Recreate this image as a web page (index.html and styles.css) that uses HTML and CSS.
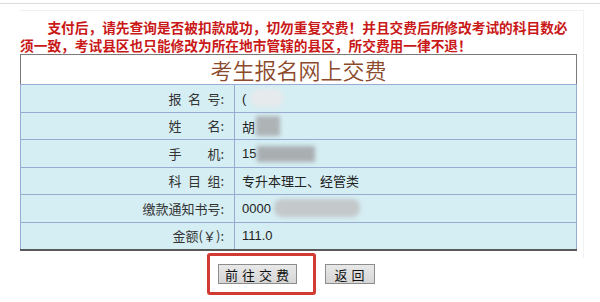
FILE: index.html
```html
<!DOCTYPE html>
<html lang="zh-CN">
<head>
<meta charset="utf-8">
<title>考生报名网上交费</title>
<link rel="stylesheet" href="styles.css">
</head>
<body>
<div class="topbar"></div>
<div class="wrap">
  <p class="notice">支付后，请先查询是否被扣款成功，切勿重复交费！并且交费后所修改考试的科目数必须一致，考试县区也只能修改为所在地市管辖的县区，所交费用一律不退！</p>
  <table class="fee">
    <tr class="title-row"><td colspan="2">考生报名网上交费</td></tr>
    <tr><td class="lbl">报&ensp;名&ensp;号:</td><td class="val"><span class="vtxt">(</span><span class="blur b1"></span></td></tr>
    <tr><td class="lbl">姓&emsp;&emsp;名:</td><td class="val"><span class="vtxt">胡</span><span class="blur b2"></span></td></tr>
    <tr><td class="lbl">手&emsp;&emsp;机:</td><td class="val"><span class="vtxt">15</span><span class="blur b3"></span></td></tr>
    <tr><td class="lbl">科&ensp;目&ensp;组:</td><td class="val">专升本理工、经管类</td></tr>
    <tr><td class="lbl">缴款通知书号:</td><td class="val"><span class="vtxt">0000</span><span class="blur b4"></span></td></tr>
    <tr><td class="lbl">金额(￥):</td><td class="val">111.0</td></tr>
  </table>
  <div class="actions">
    <span class="mark"><button class="btn btn-pay">前往交费</button></span>
    <button class="btn btn-back">返回</button>
  </div>
</div>
</body>
</html>
```
FILE: styles.css
```css
html, body {
  margin: 0;
  padding: 0;
  background: #fff;
}
body {
  font-family: "Noto Sans CJK SC", "Liberation Sans", sans-serif;
  width: 600px;
  height: 302px;
  overflow: hidden;
}
.topbar {
  height: 3px;
  border-bottom: 1px solid #dcdcdc;
}
.wrap {
  margin: 6px 16px 0 20px;
  border-top: 1px solid #f0f0f0;
  border-right: 1px solid #f2f2f2;
  padding-top: 7px;
  height: 240px;
}
.notice {
  margin: 0;
  padding-right: 8px;
  font-size: 13.7px;
  line-height: 18px;
  font-weight: bold;
  color: #c91818;
  text-indent: 2em;
}
.fee {
  margin-top: 0;
  width: 557px;
  border-collapse: collapse;
  border: 1px solid #7a7a7a;
  border-bottom: 2px solid #5a5a5a;
  font-size: 13px;
}
.fee td {
  border: 1px solid #98abd0;
  height: 26.5px;
  padding: 0;
  background: #d5eef3;
  white-space: nowrap;
}
.fee .title-row td {
  height: 29px;
  background: #fff;
  text-align: center;
  font-size: 22px;
  font-weight: 350;
  color: #8c4a2c;
  border-top: 1px solid #7a7a7a;
  border-left: 1px solid #7a7a7a;
  border-right: 1px solid #7a7a7a;
  line-height: 29px;
}
.fee td.lbl {
  width: 203px;
  text-align: right;
  padding-right: 10px;
  color: #333;
}
.fee td.val {
  padding-left: 7px;
  color: #222;
  font-family: "Liberation Sans", "Noto Sans CJK SC", sans-serif;
}
.vtxt {
  vertical-align: middle;
}
.blur {
  display: inline-block;
  vertical-align: middle;
  background: #b9bcbe;
  filter: blur(2px);
}
.b1 {
  width: 34px;
  height: 18px;
  margin-left: 4px;
  background: #e6eaec;
  border-radius: 10px;
}
.b2 {
  width: 24px;
  height: 20px;
  margin-left: 1px;
  background: #aeb3b6;
}
.b3 {
  width: 58px;
  height: 16px;
  margin-left: 1px;
  background: #a9aeb1;
}
.b4 {
  width: 86px;
  height: 18px;
  margin-left: 3px;
  background: #c4c8ca;
  border-radius: 8px;
}
.actions {
  display: flex;
  justify-content: center;
  align-items: center;
  gap: 28px;
  width: 557px;
  margin-top: 13px;
}
.mark {
  position: relative;
  display: inline-flex;
  margin-left: -5px;
}
.mark::after {
  content: "";
  position: absolute;
  left: -11px;
  right: -19px;
  top: -11px;
  bottom: -11px;
  border: 3px solid #d23a34;
  border-radius: 3px;
}
.btn {
  font-family: "Noto Sans CJK SC", sans-serif;
  font-size: 13px;
  line-height: 17px;
  height: 20px;
  padding: 0 0 0 4px;
  letter-spacing: 4px;
  white-space: nowrap;
  text-align: center;
  color: #111;
  background: linear-gradient(#e8e8e8, #d6d6d6);
  border: 1px solid #8c8c8c;
  border-radius: 0;
  cursor: pointer;
}
.btn-pay {
  width: 79px;
}
.btn-back {
  width: 50px;
}
```
